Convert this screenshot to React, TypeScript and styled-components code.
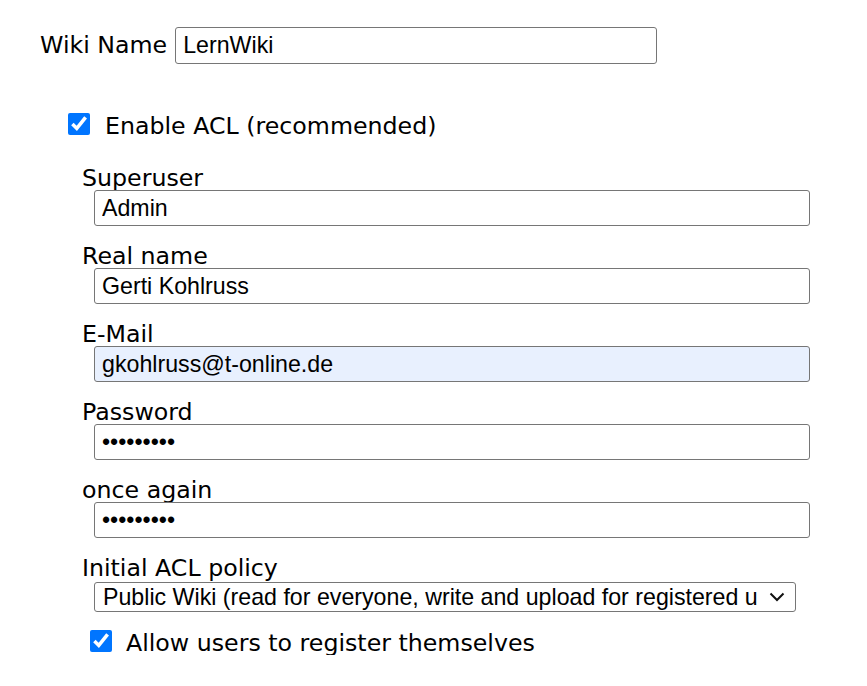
import React from "react";
import styled, { createGlobalStyle } from "styled-components";

const Global = createGlobalStyle`
  html, body { margin: 0; padding: 0; background: #fff; }
  body { font-family: "DejaVu Sans", Verdana, sans-serif; color: #000; }
`;

const Page = styled.div`
  padding: 27px 0 0 40px;
  width: 827px;
  box-sizing: border-box;
`;

const NameRow = styled.div`
  display: flex;
  align-items: center;
  gap: 8px;
  height: 37px;
`;

const Label = styled.label`
  display: block;
  font-size: 23.7px;
  line-height: 27px;
  white-space: nowrap;
`;

const FieldLabel = styled(Label)`
  padding-top: 4px;
  line-height: 23px;
`;

const TextInput = styled.input<{ $w: number; $h?: number; $auto?: boolean }>`
  box-sizing: border-box;
  width: ${(p) => p.$w}px;
  height: ${(p) => p.$h ?? 36}px;
  margin: 0;
  padding: 0 7px;
  border: 1px solid #767676;
  border-radius: 3px;
  background: ${(p) => (p.$auto ? "#e8f0fe" : "#fff")};
  font-family: "Liberation Sans", Arial, sans-serif;
  font-size: 23.2px;
  color: #000;
  outline: none;
`;

const CheckRow = styled.div<{ $indent: number; $top: number; $gap: number }>`
  display: flex;
  align-items: center;
  gap: ${(p) => p.$gap}px;
  height: 28px;
  margin: ${(p) => p.$top}px 0 0 ${(p) => p.$indent}px;
`;

const Check = styled.input`
  width: 22px;
  height: 22px;
  margin: 0;
  accent-color: #0075ff;
  flex: none;
`;

const Fields = styled.div`
  margin: 25px 0 0 42px;
`;

const Field = styled.div`
  & + & { margin-top: 15px; }
`;

const FieldControl = styled.div`
  padding-left: 12px;
`;

const SelectWrap = styled.div`
  position: relative;
  width: 702px;
  margin-top: 2px;
`;

const Select = styled.select`
  box-sizing: border-box;
  width: 702px;
  height: 30px;
  margin: 0;
  padding: 0 37px 0 8px;
  border: 1px solid #767676;
  border-radius: 3px;
  background: #fff;
  font-family: "Liberation Sans", Arial, sans-serif;
  font-size: 23.2px;
  color: #000;
  appearance: none;
  -webkit-appearance: none;
  outline: none;
`;

const Chevron = styled.svg`
  position: absolute;
  right: 11px;
  top: 10px;
  pointer-events: none;
`;

const fields = [
  { label: "Superuser", value: "Admin", type: "text" },
  { label: "Real name", value: "Gerti Kohlruss", type: "text" },
  { label: "E-Mail", value: "gkohlruss@t-online.de", type: "text", auto: true },
  { label: "Password", value: "123456789", type: "password" },
  { label: "once again", value: "123456789", type: "password" },
];

export default function App() {
  return (
    <>
      <Global />
      <Page>
        <NameRow>
          <Label>Wiki Name</Label>
          <TextInput $w={482} $h={37} defaultValue="LernWiki" />
        </NameRow>
        <CheckRow $indent={28} $top={46} $gap={15}>
          <Check type="checkbox" defaultChecked />
          <FieldLabel>Enable ACL (recommended)</FieldLabel>
        </CheckRow>
        <Fields>
          {fields.map((f) => (
            <Field key={f.label}>
              <FieldLabel>{f.label}</FieldLabel>
              <FieldControl>
                <TextInput $w={716} $auto={f.auto} type={f.type} defaultValue={f.value} />
              </FieldControl>
            </Field>
          ))}
          <Field>
            <FieldLabel>Initial ACL policy</FieldLabel>
            <FieldControl>
              <SelectWrap>
                <Select defaultValue="1">
                  <option value="1">Public Wiki (read for everyone, write and upload for registered users)</option>
                  <option value="2">Closed Wiki (read, write, upload for registered users only)</option>
                </Select>
                <Chevron width="16" height="10" viewBox="0 0 16 10">
                  <path d="M1.5 1.5 L8 8 L14.5 1.5" fill="none" stroke="#111" strokeWidth="2" />
                </Chevron>
              </SelectWrap>
            </FieldControl>
          </Field>
          <CheckRow $indent={8} $top={15} $gap={14}>
            <Check type="checkbox" defaultChecked />
            <FieldLabel>Allow users to register themselves</FieldLabel>
          </CheckRow>
        </Fields>
      </Page>
    </>
  );
}
